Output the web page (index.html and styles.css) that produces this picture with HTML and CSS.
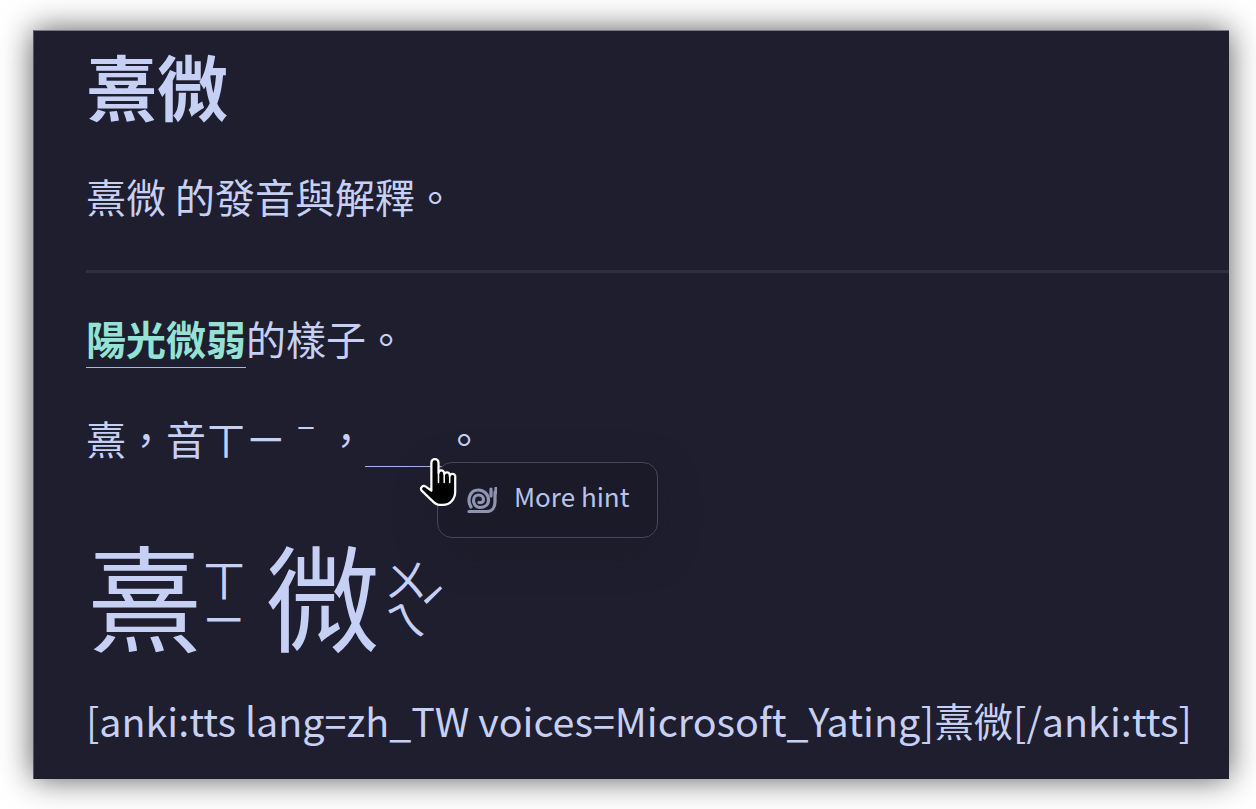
FILE: index.html
```html
<!DOCTYPE html>
<html lang="zh-Hant">
<head>
  <meta charset="UTF-8">
  <meta name="viewport" content="width=device-width, initial-scale=1.0">
  <title>熹微</title>
  <link rel="stylesheet" href="styles.css">
</head>
<body>
  <div class="card">
    <h1 class="title">熹微</h1>
    <p class="subtitle">熹微 的發音與解釋。</p>
    <hr class="divider">
    <p class="line"><a class="term">陽光微弱</a>的樣子。</p>
    <p class="line hint-line">熹，音ㄒㄧˉ，<span class="blank"></span>。</p>

    <div class="big-word">
      <div class="syllable">
        <span class="hanzi">熹</span>
        <span class="bopomofo"><span>ㄒ</span><span>ㄧ</span></span>
      </div>
      <div class="syllable">
        <span class="hanzi">微</span>
        <span class="bopomofo"><span>ㄨ</span><span>ㄟ</span></span>
        <span class="tone">ˊ</span>
      </div>
    </div>

    <p class="tts">[anki:tts lang=zh_TW voices=Microsoft_Yating]熹微[/anki:tts]</p>

    <div class="tooltip">
      <svg class="snail" viewBox="0 0 30 26" fill="none" stroke="currentColor" stroke-width="3.200" stroke-linecap="round" stroke-linejoin="round">
        <path d="M2 24.500H20C25 24.500 28 20.500 28 15V5"/>
        <path d="M24 9V2"/>
        <path d="M29 6V1"/>
        <path d="M4 20C0 14 2 3 11.500 3C17.500 3 21.500 8 21.500 13C21.500 18 17.500 20.500 13 20.500C8.500 20.500 6.500 16.500 6.500 13.500C6.500 9.500 9.500 8 11.500 8C14.500 8 16.500 10 16.500 12.500C16.500 15 14.500 16 12 15.500"/>
      </svg>
      <span>More hint</span>
    </div>

    <svg class="hand" viewBox="0 0 42 54">
      <path d="M14 7.500a3.500 3.500 0 0 1 7 0V18a2.800 2.800 0 0 1 5.600 0v1a2.800 2.800 0 0 1 5.400 0v1.500a2.800 2.800 0 0 1 5.400 0V36c0 7-5 13-12 13h-3c-4 0-6-2-8-4.500L4.500 35c-2-2.500 1-6 4-4l5.500 4z" fill="#000" stroke="#fff" stroke-width="2.200" stroke-linejoin="round"/>
      <path d="M21 19v8M26.600 20v7M32 21v6" stroke="#fff" stroke-width="1.500" stroke-linecap="round"/>
    </svg>
  </div>
</body>
</html>
```

FILE: styles.css
```css
* {
  margin: 0;
  padding: 0;
  box-sizing: border-box;
}

body {
  background-color: #fff;
  height: 809px;
  overflow: hidden;
  padding: 30px 27px 30px 33px;
  font-family: "Noto Sans CJK TC", "Noto Sans", sans-serif;
}

.card {
  position: relative;
  height: 749px;
  overflow: hidden;
  background-color: #1e1e2e;
  color: #c6d0f5;
  padding: 0 0 0 52px;
  border-top: 1px solid #77778a;
  border-left: 1px solid #55556a;
  box-shadow: 0 0 30px rgba(0, 0, 0, 0.65);
}

.title {
  font-size: 71px;
  font-weight: 700;
  line-height: 100px;
  margin-top: 3px;
}

.subtitle {
  font-size: 40px;
  line-height: 56px;
  margin-top: 34px;
}

.divider {
  border: none;
  height: 3px;
  background-color: #2f2f40;
  margin-top: 46px;
}

.line {
  font-size: 40px;
  line-height: 56px;
}

.line + .line {
  margin-top: 44px;
}

.divider + .line {
  margin-top: 37px;
}

.term {
  color: #94e2d5;
  font-weight: 700;
  border-bottom: 1px solid #a6b4e8;
}

.blank {
  display: inline-block;
  width: 79px;
  height: 1px;
  margin-left: -1px;
  background-color: #a6b4e8;
  vertical-align: -12px;
}

.big-word {
  display: flex;
  gap: 19px;
  height: 128px;
  margin-top: 62px;
  margin-left: 1px;
  align-items: center;
}

.syllable {
  display: flex;
  align-items: center;
}

.hanzi {
  font-size: 115px;
  line-height: 128px;
}

.bopomofo {
  display: flex;
  flex-direction: column;
  font-size: 44px;
  line-height: 40px;
  width: 44px;
  margin-top: 10px;
}

.syllable + .syllable .bopomofo {
  margin-left: 4px;
}

.tone {
  font-size: 50px;
  line-height: 40px;
  margin-top: 28px;
  margin-left: -10px;
}

.tts {
  font-size: 39.450px;
  line-height: 56px;
  margin-top: 35px;
}

.tooltip {
  position: absolute;
  left: 403px;
  top: 431px;
  width: 221px;
  height: 76px;
  display: flex;
  align-items: center;
  gap: 17px;
  padding: 0 0 10px 29px;
  background-color: #1a1a28;
  border: 1px solid #45475a;
  border-radius: 15px;
  box-shadow: 0 12px 40px rgba(24, 24, 37, 0.4);
  color: #b8c2ea;
  font-size: 26px;
}

.snail {
  width: 30px;
  height: 26px;
  margin-top: 10px;
  color: #8f94b3;
}

.hand {
  position: absolute;
  left: 383px;
  top: 424px;
  width: 43px;
  height: 55px;
}
```
